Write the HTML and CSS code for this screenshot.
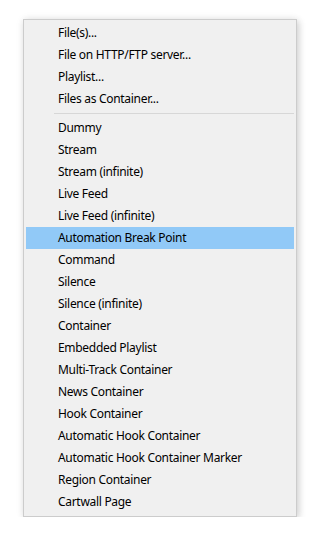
FILE: index.html
```html
<!DOCTYPE html>
<html>
<head>
<meta charset="utf-8">
<link rel="stylesheet" href="styles.css">
</head>
<body>
<div class="menu">
  <div class="item">File(s)...</div>
  <div class="item">File on HTTP/FTP server...</div>
  <div class="item">Playlist...</div>
  <div class="item">Files as Container...</div>
  <div class="sep"></div>
  <div class="item">Dummy</div>
  <div class="item">Stream</div>
  <div class="item">Stream (infinite)</div>
  <div class="item">Live Feed</div>
  <div class="item">Live Feed (infinite)</div>
  <div class="item active">Automation Break Point</div>
  <div class="item">Command</div>
  <div class="item">Silence</div>
  <div class="item">Silence (infinite)</div>
  <div class="item">Container</div>
  <div class="item">Embedded Playlist</div>
  <div class="item">Multi-Track Container</div>
  <div class="item">News Container</div>
  <div class="item">Hook Container</div>
  <div class="item">Automatic Hook Container</div>
  <div class="item">Automatic Hook Container Marker</div>
  <div class="item">Region Container</div>
  <div class="item">Cartwall Page</div>
</div>
</body>
</html>
```
FILE: styles.css
```css
html, body {
  margin: 0;
  padding: 0;
  background: #ffffff;
}
body {
  padding: 19px 0 0 23px;
  font-family: "Noto Sans", "Open Sans", sans-serif;
  font-size: 12px;
  letter-spacing: -0.3px;
  color: #000;
}
.menu {
  box-sizing: border-box;
  width: 274px;
  height: 498px;
  background: #f0f0f0;
  border: 1px solid #cccccc;
  padding: 2px;
  box-shadow: 2px 2px 7px rgba(0, 0, 0, 0.16), 0 0 9px rgba(0, 0, 0, 0.06);
  display: flex;
  flex-direction: column;
}
.item {
  height: 22px;
  line-height: 22px;
  padding-left: 32px;
  white-space: nowrap;
}
.item.active {
  background: #91c9f7;
}
.sep {
  height: 7px;
  display: flex;
  align-items: center;
  padding-left: 28px;
}
.sep::before {
  content: "";
  flex: 1;
  height: 1px;
  background: #d7d7d7;
}
```
